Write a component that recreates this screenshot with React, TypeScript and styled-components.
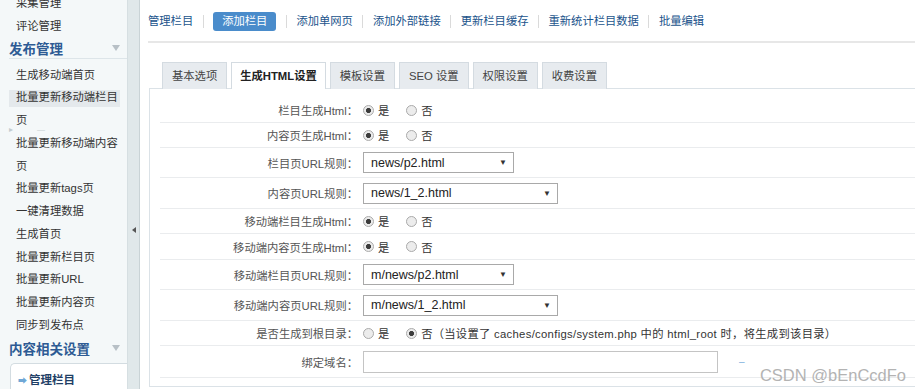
import React from "react"
import styled, { createGlobalStyle } from "styled-components"

const GlobalStyle = createGlobalStyle`
  * { box-sizing: border-box; }
  html, body {
    margin: 0;
    padding: 0;
    width: 915px;
    height: 389px;
    overflow: hidden;
    background: #fff;
  }
  body {
    font-family: "Liberation Sans", Arial, "Noto Sans CJK SC", sans-serif;
    font-size: 11.3px;
    color: #333;
  }
`

type Field =
  | { kind: "radio"; label: string; h: number; yes: boolean; note?: string }
  | { kind: "select"; label: string; h: number; value: string; width: number }
  | { kind: "input"; label: string; h: number }

const fields: Field[] = [
  { kind: "radio", label: "栏目生成Html：", h: 25, yes: true },
  { kind: "radio", label: "内容页生成Html：", h: 25, yes: true },
  { kind: "select", label: "栏目页URL规则：", h: 30, value: "news/p2.html", width: 151 },
  { kind: "select", label: "内容页URL规则：", h: 31, value: "news/1_2.html", width: 195 },
  { kind: "radio", label: "移动端栏目生成Html：", h: 25, yes: true },
  { kind: "radio", label: "移动端内容页生成Html：", h: 26, yes: true },
  { kind: "select", label: "移动端栏目页URL规则：", h: 30, value: "m/news/p2.html", width: 151 },
  { kind: "select", label: "移动端内容页URL规则：", h: 31, value: "m/news/1_2.html", width: 195 },
  {
    kind: "radio",
    label: "是否生成到根目录：",
    h: 25,
    yes: false,
    note: "（当设置了 caches/configs/system.php 中的 html_root 时，将生成到该目录）",
  },
  { kind: "input", label: "绑定域名：", h: 32 },
]

const navLinks = ["管理栏目", "添加栏目", "添加单网页", "添加外部链接", "更新栏目缓存", "重新统计栏目数据", "批量编辑"]
const tabs = ["基本选项", "生成HTML设置", "模板设置", "SEO 设置", "权限设置", "收费设置"]

const Radio = ({ checked, children }: { checked: boolean; children: React.ReactNode }) => (
  <RadioOption>
    <RadioDot $checked={checked} />
    <span>{children}</span>
  </RadioOption>
)

export default function App() {
  return (
    <Page>
      <GlobalStyle />
      <Sidebar>
        <SideList>
          <SideItem>采集管理</SideItem>
          <SideItem>评论管理</SideItem>
          <SideHeading $line>
            发布管理
            <Caret />
          </SideHeading>
          <SideItem>生成移动端首页</SideItem>
          <SideItem $active>批量更新移动端栏目页</SideItem>
          <GhostMarks>
            <span>▸</span>
            <span>—</span>
          </GhostMarks>
          <SideItem>批量更新移动端内容页</SideItem>
          <SideItem>批量更新tags页</SideItem>
          <SideItem>一键清理数据</SideItem>
          <SideItem>生成首页</SideItem>
          <SideItem>批量更新栏目页</SideItem>
          <SideItem>批量更新URL</SideItem>
          <SideItem>批量更新内容页</SideItem>
          <SideItem>同步到发布点</SideItem>
          <SideHeading>
            内容相关设置
            <Caret />
          </SideHeading>
          <MenuBox>
            <MenuArrow>➡</MenuArrow>管理栏目
          </MenuBox>
        </SideList>
      </Sidebar>

      <Splitter>
        <SplitArrow />
      </Splitter>

      <Main>
        <Nav>
          {navLinks.map((link, i) => (
            <React.Fragment key={link}>
              {i > 0 && <NavSep />}
              <NavLink $active={i === 1}>{link}</NavLink>
            </React.Fragment>
          ))}
        </Nav>

        <Tabs>
          {tabs.map((tab, i) => (
            <Tab key={tab} $active={i === 1}>
              {tab}
            </Tab>
          ))}
        </Tabs>

        <FormBox>
          {fields.map((f) => (
            <Row key={f.label} $h={f.h}>
              <Label>{f.label}</Label>
              <Value>
                {f.kind === "radio" && (
                  <>
                    <Radio checked={f.yes}>是</Radio>
                    <Radio checked={!f.yes}>否</Radio>
                    {f.note && <Note>{f.note}</Note>}
                  </>
                )}
                {f.kind === "select" && (
                  <SelectBox $width={f.width}>
                    <span>{f.value}</span>
                    <SelectArrow>▼</SelectArrow>
                  </SelectBox>
                )}
                {f.kind === "input" && (
                  <>
                    <TextInput />
                    <Dash>–</Dash>
                  </>
                )}
              </Value>
            </Row>
          ))}
        </FormBox>

        <Watermark>CSDN @bEnCcdFo</Watermark>
      </Main>
    </Page>
  )
}

const Page = styled.div`
  display: flex;
  width: 915px;
  height: 389px;
`

const Sidebar = styled.aside`
  flex: none;
  width: 127px;
  background: #f4f8f9;
  overflow: hidden;
`

const SideList = styled.div`
  margin-top: -8px;
  display: flex;
  flex-direction: column;
`

const SideItem = styled.div<{ $active?: boolean }>`
  margin-left: 9px;
  padding-left: 7px;
  width: 118px;
  line-height: 22.75px;
  color: #333;
  background: ${(p) =>
    p.$active ? "linear-gradient(#e4e9ec, #e4e9ec) no-repeat 0 4px / 111px 17px" : "none"};
`

const SideHeading = styled.div<{ $line?: boolean }>`
  margin-left: 9px;
  padding-right: 7px;
  display: flex;
  align-items: center;
  justify-content: space-between;
  height: ${(p) => (p.$line ? "21px" : "22px")};
  font-size: 13.5px;
  font-weight: bold;
  color: #2d5b94;
  border-bottom: ${(p) => (p.$line ? "1px solid #dde5e9" : "none")};
  margin-bottom: ${(p) => (p.$line ? "5px" : "0")};
`

const Caret = styled.span`
  width: 0;
  height: 0;
  border-left: 4.5px solid transparent;
  border-right: 4.5px solid transparent;
  border-top: 6px solid #b7c0c6;
`

const GhostMarks = styled.div`
  height: 0;
  display: flex;
  gap: 24px;
  padding-left: 9px;
  line-height: 8px;
  transform: translateY(-6px);
  font-size: 8px;
  color: #c3ccd0;
`

const MenuBox = styled.div`
  margin: 4px 0 0 10px;
  height: 40px;
  padding: 5px 0 0 7px;
  background: #fff;
  border: 1px solid #d3dce1;
  border-right: none;
  border-radius: 5px 0 0 0;
  line-height: 22px;
  font-size: 11.5px;
  font-weight: bold;
  color: #1f3f66;
`

const MenuArrow = styled.span`
  color: #6fa7d6;
  font-size: 9px;
  margin-right: 2px;
`

const Splitter = styled.div`
  flex: none;
  width: 13px;
  background: #e0e8ea;
  border-left: 1px solid #d6dfe2;
  border-right: 1px solid #c9d3d6;
  display: flex;
  justify-content: center;
  padding-top: 227px;
`

const SplitArrow = styled.span`
  width: 0;
  height: 0;
  border-right: 4px solid #555;
  border-top: 3.5px solid transparent;
  border-bottom: 3.5px solid transparent;
`

const Main = styled.main`
  flex: 1;
  position: relative;
  overflow: hidden;
  padding-left: 8px;
`

const Nav = styled.nav`
  height: 43px;
  padding-top: 2px;
  display: flex;
  align-items: center;
  border-bottom: 2px solid #e7e7e7;
`

const NavLink = styled.span<{ $active?: boolean }>`
  color: ${(p) => (p.$active ? "#fff" : "#21538b")};
  background: ${(p) => (p.$active ? "#4a8ccb" : "none")};
  padding: ${(p) => (p.$active ? "0 9px" : "0")};
  height: 19px;
  line-height: 19px;
  border-radius: 3px;
  white-space: nowrap;
`

const NavSep = styled.span`
  width: 1px;
  height: 13px;
  background: #dadada;
  margin: 0 9.5px;
`

const Tabs = styled.div`
  margin-top: 19px;
  padding-left: 14px;
  display: flex;
  gap: 4px;
`

const Tab = styled.div<{ $active?: boolean }>`
  position: relative;
  z-index: 1;
  height: 27px;
  margin-bottom: -1px;
  padding: 0 ${(p) => (p.$active ? "8px" : "9px")};
  line-height: 26px;
  border: 1px solid #d4dbe1;
  border-bottom: none;
  background: ${(p) => (p.$active ? "#fff" : "#e7ebef")};
  font-weight: ${(p) => (p.$active ? "bold" : "normal")};
  color: ${(p) => (p.$active ? "#222" : "#444")};
  white-space: nowrap;
`

const FormBox = styled.div`
  margin-left: 1px;
  width: calc(100% + 20px);
  border: 1px solid #dbe2e7;
  padding: 9px 0 8px 10px;
`

const Row = styled.div<{ $h: number }>`
  height: ${(p) => p.$h}px;
  display: flex;
  align-items: center;
  border-bottom: 1px solid #eaecee;
`

const Label = styled.div`
  flex: none;
  width: 198px;
  text-align: right;
  color: #555;
  white-space: nowrap;
`

const Value = styled.div`
  padding-left: 5px;
  display: flex;
  align-items: center;
`

const RadioOption = styled.label`
  display: inline-flex;
  align-items: center;
  gap: 4px;
  margin-right: 17px;
  color: #333;
  &:nth-of-type(2) {
    margin-right: 0;
  }
`

const RadioDot = styled.span<{ $checked: boolean }>`
  width: 11px;
  height: 11px;
  border-radius: 50%;
  border: 1px solid #aaa;
  background: ${(p) =>
    p.$checked
      ? "radial-gradient(circle, #3b3b3b 0 2.2px, #ebebeb 2.9px)"
      : "#ececec"};
`

const Note = styled.span`
  color: #333;
  white-space: nowrap;
  letter-spacing: 0.3px;
`

const SelectBox = styled.div<{ $width: number }>`
  width: ${(p) => p.$width}px;
  height: 21px;
  border: 1px solid #a9a9a9;
  background: #fff;
  display: flex;
  align-items: center;
  justify-content: space-between;
  padding: 0 6px 0 7px;
  font-size: 12.5px;
  color: #222;
`

const SelectArrow = styled.span`
  font-size: 8px;
  color: #333;
`

const TextInput = styled.div`
  width: 355px;
  height: 22px;
  border: 1px solid #c4c4c4;
  background: #fff;
`

const Dash = styled.span`
  margin-left: 21px;
  color: #7fb1de;
  font-size: 10px;
`

const Watermark = styled.div`
  position: absolute;
  right: 9px;
  bottom: 4px;
  font-size: 16.5px;
  color: #b3b3b3;
  font-family: "Liberation Sans", Arial, sans-serif;
`
